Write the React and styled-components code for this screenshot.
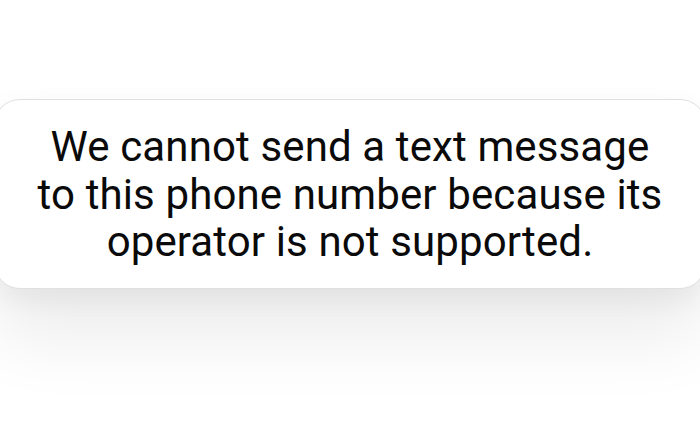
import styled, { createGlobalStyle } from "styled-components";

const Global = createGlobalStyle`
    html, body {
        margin: 0;
        padding: 0;
        background: #ffffff;
        overflow: hidden;
    }
`

const Screen = styled.div`
    width: 700px;
    height: 430px;
    overflow: hidden;
    background: #ffffff;
    padding-top: 99px;
    box-sizing: border-box;
    font-family: Roboto, "Noto Sans", sans-serif;
`

const Toast = styled.div`
    margin: 0 -6px;
    background: #ffffff;
    border: 1px solid #e0e0e0;
    border-radius: 26px;
    box-shadow: 0 50px 70px rgba(0, 0, 0, 0.075), 0 14px 22px rgba(0, 0, 0, 0.045), 0 -6px 14px rgba(0, 0, 0, 0.015);
    padding: 23px 10px 22px;
    text-align: center;
`

const Message = styled.p`
    margin: 0;
    color: #0a0a0a;
    font-size: 42px;
    line-height: 47.5px;
    font-weight: 400;
    letter-spacing: 0.12px;
`

export default function App() {
    return (
        <Screen>
            <Global />
            <Toast>
                <Message>
                    We cannot send a text message<br />
                    to this phone number because its<br />
                    operator is not supported.
                </Message>
            </Toast>
        </Screen>
    );
}
